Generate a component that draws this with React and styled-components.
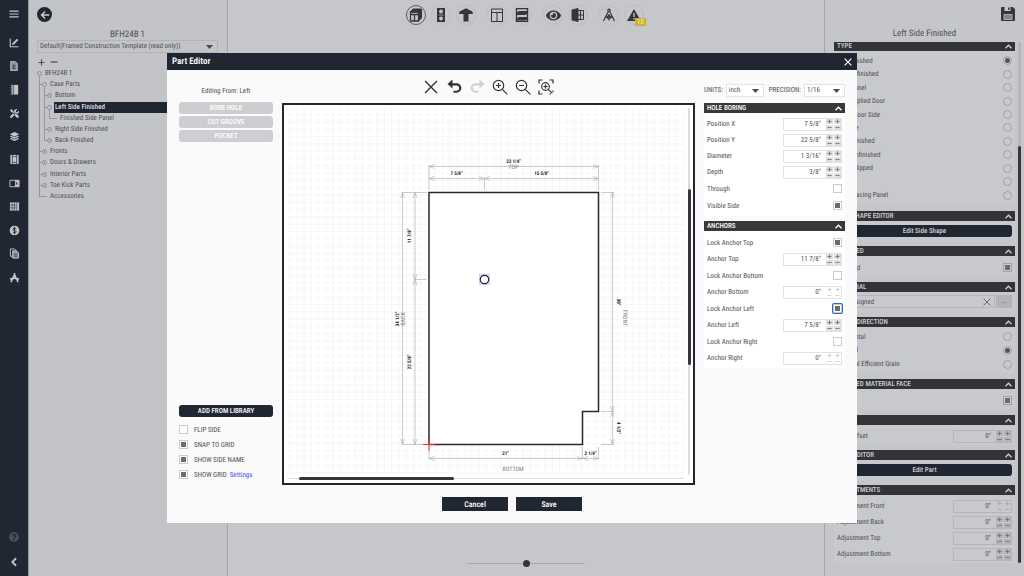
import React from "react";
import styled, { createGlobalStyle, css } from "styled-components";
import { FaTools, FaLayerGroup, FaQuestionCircle, FaEye } from "react-icons/fa";

const navy = "#202632";
const charcoal = "#39393b";

const GlobalStyle = createGlobalStyle`
  *, *::before, *::after { box-sizing: border-box; }
  body {
    margin: 0;
    font-family: "Roboto Condensed", "Liberation Sans Narrow", Roboto, sans-serif;
    font-size: 7px;
    line-height: 10px;
    text-rendering: geometricPrecision;
    color: #505053;
    background: #c6c7cb;
  }
  button, input, select { font: inherit; color: inherit; text-rendering: inherit; margin: 0; padding: 0; border: 0; background: none; border-radius: 0; }
  h1, h2, h3, p, ul { margin: 0; padding: 0; font: inherit; list-style: none; }
  svg { display: block; }
`;

/* ---------- shell ---------- */
const Shell = styled.div`
  display: grid;
  grid-template-columns: 28px 200px minmax(0, 1fr) 200px;
  min-height: 100vh;
`;
const Sidebar = styled.nav`
  display: flex;
  flex-direction: column;
  align-items: center;
  background: ${navy};
  color: #c3c4c8;
  padding-bottom: 3px;
`;
const SideList = styled.div`
  display: grid;
  grid-auto-rows: 1fr;
  min-height: 258px;
  margin-top: 3px;
`;
const SideButton = styled.button`
  display: grid;
  place-items: center;
  width: 28px;
  min-height: 23px;
  ${(p) => p.$first && "height: 28px;"}
  ${(p) => p.$dim && "color: #4b505a; margin-bottom: 2px;"}
`;
const Spacer = styled.div`flex: 1;`;

const TreePanel = styled.aside`
  background: #c3c4c8;
  border-left: 1px solid #92979f;
  border-right: 1px solid #a5a6aa;
  padding: 7px 9px 0 8px;
`;
const BackButton = styled.button`
  display: grid;
  place-items: center;
  width: 15px;
  height: 15px;
  border-radius: 50%;
  background: ${navy};
  color: #d0d1d4;
`;
const PanelTitle = styled.h2`
  text-align: center;
  font-size: 9px;
  line-height: 12px;
  padding-top: 1px;
  margin: 6px 0 -1px;
`;
const SelectBox = styled.span`
  display: flex;
  align-items: center;
  position: relative;
  height: 13px;
  flex: ${(p) => p.$width || "auto"};
  border: 1px solid ${(p) => (p.$light ? "#e4e4e4" : "#b3b4b8")};
  background: ${(p) => (p.$light ? "#fff" : "transparent")};
  select { appearance: none; width: 100%; height: 11px; padding: 0 2px; line-height: 11px; outline: none; }
  svg { position: absolute; right: 4px; top: 4px; pointer-events: none; }
`;
const TreeTools = styled.div`
  display: flex;
  gap: 5px;
  padding: 5px 0 2px;
  button { display: grid; place-items: center; width: 8px; height: 8px; }
`;
const Tree = styled.ul`
  display: grid;
  grid-auto-rows: 1fr;
  min-height: 134px;
  margin-right: -9px;
`;
const TreeRow = styled.li`display: flex; align-items: stretch;`;
const Guide = styled.span`
  position: relative;
  width: 5px;
  &::before {
    content: "";
    position: absolute;
    left: 2px;
    top: 0;
    width: 1px;
    height: ${(p) => ({ "|": "100%", T: "100%", L: "50%" }[p.$kind] || 0)};
    background: #96979b;
  }
  &::after {
    content: "";
    position: absolute;
    left: ${(p) => (p.$kind === "-" ? 0 : "2px")};
    right: 0;
    top: 5px;
    height: ${(p) => ("TL-".includes(p.$kind) ? "1px" : 0)};
    background: #96979b;
  }
`;
const Toggle = styled.button`
  position: relative;
  width: 5px;
  height: 5px;
  margin-top: 3px;
  border: 1px solid #8e8f93;
  border-radius: 50%;
  ${(p) => p.$open && css`
    &::after { content: ""; position: absolute; left: 1px; top: 4px; width: 1px; height: 4px; background: #96979b; }
  `}
  ${(p) => !p.$open && css`
    &::before { content: ""; position: absolute; left: 1px; top: 1px; width: 1px; height: 1px; background: #77787c; }
  `}
`;
const TreeLabel = styled.a`
  flex: 1;
  margin-left: 2px;
  padding-left: 1px;
  line-height: 11px;
  white-space: nowrap;
  text-decoration: none;
  color: inherit;
  ${(p) => p.$selected && `background: ${navy}; color: #dcdde0; font-weight: 500;`}
`;

const Stage = styled.main`
  display: flex;
  flex-direction: column;
  align-items: center;
  justify-content: space-between;
  background: #c6c7cb;
  padding: 5px 0 9px;
`;
const ViewBar = styled.div`display: flex; gap: 11px; padding-right: 2px; color: #35363a;`;
const ViewGroup = styled.div`display: flex; gap: 5px;`;
const ViewButton = styled.button`
  position: relative;
  display: grid;
  place-items: center;
  width: 20px;
  height: 20px;
  border-radius: 50%;
  border: 1px solid ${(p) => (p.$active ? "#5d5e62" : "#bbbcc0")};
`;
const Badge = styled.span`
  position: absolute;
  right: -3px;
  bottom: -2px;
  padding: 0 2px;
  line-height: 8px;
  background: #c6b32f;
  color: #f0edd8;
`;
const Zoom = styled.input`
  appearance: none;
  width: 118px;
  height: 7px;
  background: linear-gradient(#aaabaf, #aaabaf) center / 100% 1px no-repeat;
  &::-webkit-slider-thumb {
    appearance: none;
    width: 7px;
    height: 7px;
    border-radius: 50%;
    background: #35363a;
  }
`;

/* ---------- property panels ---------- */
const PropsPanel = styled.aside`
  display: flex;
  flex-direction: column;
  background: #c5c6ca;
  border-left: 1px solid #a5a6aa;
`;
const SaveButton = styled.button`
  align-self: flex-end;
  margin: 7px 9px 0 0;
  color: #35363a;
`;
const PropsScroll = styled.div`
  display: flex;
  gap: 3px;
  margin-top: 3px;
  padding: 0 3px 0 9px;
  overflow: hidden;
`;
const Stack = styled.div`
  display: flex;
  flex-direction: column;
  gap: 5px;
  flex: 1;
  min-width: 0;
  ${(p) => p.$scrolled && "margin-top: -1px;"}
`;
const Track = styled.div`
  position: relative;
  background: ${(p) => p.$color || "#b4b5b9"};
  border-radius: 2px;
  &::after {
    content: "";
    position: absolute;
    border-radius: 2px;
    background: #35363a;
    ${(p) => p.$thumb}
  }
`;
const PropsTrack = styled(Track)`width: 3px;`;
const SectionBox = styled.section`
  background: ${(p) => (p.$light ? "#fff" : "#c8c9cd")};
`;
const SectionHead = styled.h3`
  display: flex;
  align-items: center;
  justify-content: space-between;
  height: 10px;
  padding: 0 3px;
  background: ${(p) => (p.$light ? charcoal : "#333438")};
  color: ${(p) => (p.$light ? "#fff" : "#cfd0d3")};
  font-weight: 500;
  text-transform: uppercase;
  white-space: nowrap;
`;
const SectionBody = styled.div`
  display: flex;
  flex-direction: column;
  padding: 3px 3px 1px;
  min-height: ${(p) => p.$min || 0}px;
`;
const Row = styled.label`
  display: flex;
  align-items: center;
  justify-content: space-between;
  height: ${(p) => (p.$tall ? 17 : 16)}px;
  white-space: nowrap;
`;
const RadioRows = styled.div`
  display: grid;
  grid-auto-rows: 1fr;
  min-height: ${(p) => p.$min}px;
  label { display: flex; align-items: center; justify-content: space-between; white-space: nowrap; }
`;
const Radio = styled.input.attrs({ type: "radio" })`
  appearance: none;
  width: 9px;
  height: 9px;
  border: 1px solid #a2a3a7;
  border-radius: 50%;
  &:checked { padding: 1px; background: #55565a content-box; }
`;
const Check = styled.input.attrs({ type: "checkbox" })`
  appearance: none;
  width: 9px;
  height: 9px;
  flex: none;
  border: 1px solid ${(p) => (p.$dark ? "#a2a3a7" : "#cbcbcb")};
  background-color: ${(p) => (p.$dark ? "transparent" : "#fff")};
  &:checked {
    background: linear-gradient(#6c6c6e, #6c6c6e) center / 5px 5px no-repeat ${(p) => (p.$dark ? "transparent" : "#fff")};
  }
  ${(p) => p.$focus && "box-shadow: 0 0 0 1px #2f62d0; border-radius: 1px;"}
`;
const NumberBox = styled.span`
  display: flex;
  width: 59px;
  height: 13px;
  border: 1px solid ${(p) => (p.$dark ? "#b5b6ba" : "#e2e2e2")};
  background: ${(p) => (p.$dark ? "transparent" : "#fff")};
  input { flex: 1; min-width: 0; text-align: right; padding-right: 5px; outline: none; }
`;
const Steppers = styled.span`
  display: grid;
  grid-template-columns: 7px 7px;
  grid-template-rows: 5px 5px;
  gap: 1px;
  color: #6e6e71;
  opacity: ${(p) => (p.$off ? 0.35 : 1)};
  button {
    display: grid;
    place-items: center;
    background: ${(p) => (p.$off ? "transparent" : p.$dark ? "#b3b4b8" : "#e0e0e0")};
  }
`;
const WideButton = styled.button`
  height: 12px;
  flex: none;
  border-radius: 3px;
  background: ${(p) => (p.$dim ? "#cdced2" : navy)};
  color: ${(p) => (p.$soft ? "#cfd0d3" : "#fff")};
  font-weight: 500;
  line-height: 12px;
  ${(p) => p.$soft && "margin-top: 1px;"}
`;
const MaterialRow = styled.div`
  display: grid;
  grid-template-columns: 1fr 16px;
  gap: 1px;
  height: 13px;
`;
const MaterialField = styled.span`
  display: flex;
  align-items: center;
  justify-content: space-between;
  border: 1px solid #b5b6ba;
  padding: 0 3px 0 4px;
  input { width: 90px; }
`;
const MoreButton = styled.button`background: #b3b4b8; line-height: 9px;`;

/* ---------- dialog ---------- */
const Overlay = styled.div`
  position: fixed;
  inset: 0;
  display: grid;
  place-items: center;
`;
const Dialog = styled.section`
  width: 100%;
  max-width: 690px;
  background: #fafafa;
`;
const DialogHead = styled.header`
  display: flex;
  align-items: center;
  justify-content: space-between;
  height: 17px;
  padding: 0 5px;
  background: ${navy};
  color: #fff;
  h1 { font-size: 9px; line-height: 12px; font-weight: 600; }
`;
const DialogBody = styled.div`
  display: grid;
  grid-template-columns: 94px minmax(0, 1fr) 141px;
  column-gap: 9px;
  padding: 0 12px;
`;
const Column = styled.div`display: flex; flex-direction: column;`;
const TopLine = styled.div`
  display: flex;
  align-items: center;
  justify-content: ${(p) => (p.$center ? "center" : "flex-start")};
  gap: ${(p) => p.$gap || 0}px;
  height: 33px;
  padding-top: ${(p) => p.$pad || 0}px;
  white-space: nowrap;
`;
const Setting = styled.span`
  display: flex;
  align-items: center;
  gap: 3px;
  &:last-child { margin-left: auto; }
`;
const ButtonStack = styled.div`display: flex; flex-direction: column; gap: 2px; margin-top: -1px;`;
const Options = styled.div`
  display: flex;
  flex-direction: column;
  margin: 5px 0 3px;
  text-transform: uppercase;
`;
const Option = styled.div`
  display: flex;
  align-items: center;
  height: 15px;
  label { display: flex; align-items: center; gap: 6px; }
  a { margin-left: 3px; color: #3b4ff0; text-decoration: none; text-transform: none; }
`;
const ToolButton = styled.button`
  display: grid;
  place-items: center;
  width: 16px;
  height: 16px;
  color: ${(p) => (p.$off ? "#d2d2d2" : "#333")};
`;
const Drawing = styled.div`
  display: grid;
  grid-template-columns: minmax(0, 1fr) 5px;
  grid-template-rows: auto 8px;
  border: 2px solid ${navy};
  background: #fff;
  svg { width: 100%; height: auto; }
`;
const TrackY = styled(Track)`width: 2px; margin-top: 3px;`;
const TrackX = styled(Track)`height: 1px; margin: 3px 4px 0 3px;`;
const Footer = styled.footer`
  display: flex;
  justify-content: center;
  gap: 8px;
  padding: 12px 0;
  button {
    width: 66px;
    height: 14px;
    padding-top: 1px;
    background: ${navy};
    color: #fff;
    font-size: 8px;
    font-weight: 500;
  }
`;

/* ---------- icons ---------- */
const Icon = ({ size = 12, box = 12, children, w = 1 }) => (
  <svg width={size} height={size} viewBox={`0 0 ${box} ${box}`} fill="none" stroke="currentColor" strokeWidth={w} aria-hidden="true">
    {children}
  </svg>
);
const Caret = () => (
  <svg width="7" height="4" viewBox="0 0 7 4" aria-hidden="true"><path d="M0 0h7L3.5 4z" fill="#4b4b4e" /></svg>
);
const ChevronUp = () => (
  <svg width="7" height="5" viewBox="0 0 7 5" fill="none" stroke="currentColor" strokeWidth="1.3" aria-hidden="true"><path d="M.5 4.2l3-3 3 3" /></svg>
);
const Cross = ({ size = 8, w = 1.2 }) => (
  <Icon size={size} box={8} w={w}><path d="M.6.6l6.8 6.8M7.4.6L.6 7.4" /></Icon>
);
const Plus = ({ size = 5, w = 0.8 }) => <Icon size={size} box={5} w={w}><path d="M2.5.4v4.2M.4 2.5h4.2" /></Icon>;
const Minus = ({ size = 5, w = 0.8 }) => <Icon size={size} box={5} w={w}><path d="M.4 2.5h4.2" /></Icon>;

const sideIcons = [
  ["Statistics", <Icon size={10}><path d="M1.5.5v10h10" strokeWidth="1.3" /><path d="M3.5 8.5l.8-2.6L9.6.9l1.5 1.5L6 7.7z" fill="currentColor" stroke="none" /></Icon>],
  ["Report", <Icon size={10}><path d="M2 .5h5.5L10 3v8.5H2z" fill="#92959b" /><path d="M4 5h4M4 7h4M4 9h4M5.5 5v5" stroke={navy} strokeWidth=".6" /></Icon>],
  ["Catalog", <Icon size={11}><path d="M3.5 1H10v10.5H3.5z" fill="currentColor" stroke="none" /><path d="M2.6 1v10.5" strokeDasharray="1.5 .8" /><path d="M5 1v10.5" stroke={navy} strokeWidth=".6" /></Icon>],
  ["Tools", <FaTools size={9} />],
  ["Materials", <FaLayerGroup size={9} />],
  ["Cabinet", <Icon size={11}><path d="M1.5 1h9v10h-9z" fill="currentColor" stroke="none" /><path d="M3.7 1v10M8.3 1v10M3.7 2.8h4.6M3.7 9.2h4.6" stroke={navy} strokeWidth=".7" /></Icon>],
  ["Layout", <Icon size={11}><path d="M1 2.5h10v7H1z" /><path d="M6.5 2.5h4.5v7H6.5z" fill="currentColor" stroke="none" /><path d="M8 5l2 2M8 4.5v3" stroke={navy} strokeWidth=".8" /></Icon>],
  ["Grid", <Icon size={11}><path d="M1 1.5h10v9H1z" fill="currentColor" stroke="none" /><path d="M1 4.5h7M1 7.5h7M3.5 1.5v9M6 1.5v9M8.5 1.5v9" stroke={navy} strokeWidth=".6" /></Icon>],
  ["Pricing", <Icon size={11}><circle cx="6" cy="6" r="5.3" fill="currentColor" stroke="none" /><path d="M7.9 4.3C7 3 4.3 3.2 4.3 4.7c0 1.7 3.5 1 3.5 2.7C7.8 9 5 9 4.1 7.7M6 2v8" stroke={navy} /></Icon>],
  ["Documents", <Icon size={11}><path d="M1.5 1h4.5l2 2M1.5 1v8h2" /><path d="M4 3h4l2.5 2.5V11H4z" fill="#92959b" /><path d="M5.5 7h3.5M5.5 9h3.5" stroke={navy} strokeWidth=".7" /></Icon>],
  ["Design", <Icon size={11} w={1.8}><path d="M6 1v2M6 3L2 11M6 3l4 8M1 7.5h3l2-1.5 2 1.5h3" /></Icon>],
];

const viewGroups = [
  [
    ["3D view", true, <Icon size={14} box={14}><path d="M1.5 4h8v9h-8z" strokeWidth="1.3" /><path d="M1.5 4L4 1h8.5L9.500 4zM9.500 4l3-3v9l-3 3z" fill="currentColor" /><path d="M1.5 6.500h8M5.500 6.500V13" strokeWidth="1.3" /></Icon>],
    ["Front view", false, <Icon size={14} box={14}><path d="M3 0h8v14H3z" fill="currentColor" stroke="none" /><circle cx="7" cy="3.5" r="1.9" fill="#c6c7cb" stroke="none" /><circle cx="7" cy="10.5" r="1.9" fill="#c6c7cb" stroke="none" /><path d="M4.5 7h5" stroke="#c6c7cb" strokeWidth=".7" /></Icon>],
    ["Top view", false, <Icon size={14} box={14}><path d="M0 6C0 3 2.5 2.8 4.5 1.5 6 0 8 0 9.5 1.5 11.5 2.8 14 3 14 6H9.5v7.5h-5V6z" fill="currentColor" stroke="none" /></Icon>],
  ],
  [
    ["Doors", false, <Icon size={14} box={14}><path d="M1.5 1h11v12.5h-11zM1.5 4.5h11M7 4.5v9" /></Icon>],
    ["Shelves", false, <Icon size={14} box={14}><path d="M1.5.5h11v13h-11z" strokeWidth="1.4" /><path d="M1 5l3-2h9v2.5L10 7H1zM1 11l3-2h9v2l-3 1.5H1z" fill="currentColor" stroke="none" /></Icon>],
  ],
  [
    ["Visibility", false, <FaEye size={15} />],
    ["Open doors", false, <Icon size={14} box={14}><path d="M1 2l6-1.5v13L1 12z" fill="currentColor" /><path d="M7 2.5h5.5v9H7M7 7h5.5M9.5 2.5v9" /></Icon>],
  ],
  [
    ["Measure", false, <Icon size={14} box={14} w={1.2}><circle cx="7" cy="2.3" r="1.2" /><path d="M6.5 3.3L1.5 13M7.5 3.3l5 9.7M2.5 9.5c2.5 0 4-1 4.5-3 .5 2 2 3 4.5 3M7 8v4.5M5 10.2h4" /></Icon>],
    ["Warnings", false, <Icon size={14} box={14}><path d="M7 1l7 12H0z" fill="currentColor" stroke="none" /><path d="M7 5v4M7 10.2v1.5" stroke="#c6c7cb" strokeWidth="1.3" /></Icon>],
  ],
];

const undoPath = "M5.5.5L.5 5l5 4.5V6.5h4a2.6 2.6 0 0 1 0 5.2H6.5v2h3.2a4.6 4.6 0 0 0 0-9.4H5.5z";
const drawTools = [
  ["Delete", false, <Cross size={14} w={0.8} />],
  ["Undo", false, <Icon size={15} box={15}><path d={undoPath} fill="currentColor" stroke="none" /></Icon>],
  ["Redo", true, <Icon size={15} box={15}><path d={undoPath} transform="matrix(-1 0 0 1 15 0)" fill="currentColor" stroke="none" /></Icon>],
  ["Zoom in", false, <Icon size={16} box={16} w={1.2}><circle cx="6.5" cy="6.5" r="5.2" /><path d="M10.3 10.3l5 5M4 6.5h5M6.5 4v5" /></Icon>],
  ["Zoom out", false, <Icon size={16} box={16} w={1.2}><circle cx="6.5" cy="6.5" r="5.2" /><path d="M10.3 10.3l5 5M4 6.5h5" /></Icon>],
  ["Zoom to fit", false, <Icon size={16} box={16} w={1.2}><circle cx="7.5" cy="7.5" r="3.8" /><path d="M10.3 10.3l4 4M5.5 7.5h4M7.5 5.5v4M1 4.5V1h3.5M11.5 1H15v3.5M1 11.5V15h3.5M11.5 15H13M15 11.5V13" /></Icon>],
];

/* ---------- data ---------- */
const tree = [
  ["", "open", "BFH24B 1"],
  ["T", "open", "Case Parts"],
  ["|T", "closed", "Bottom"],
  ["|T", "open", "Left Side Finished", true],
  ["||L", "leaf", "Finished Side Panel"],
  ["|T", "closed", "Right Side Finished"],
  ["|L", "closed", "Back Finished"],
  ["T", "closed", "Fronts"],
  ["T", "closed", "Doors & Drawers"],
  ["T", "closed", "Interior Parts"],
  ["T", "closed", "Toe Kick Parts"],
  ["L", "leaf", "Accessories"],
];
const sideTypes = [
  "Left Finished", "Left Unfinished", "Side Panel", "Left Applied Door", "False Door Side", "No Side",
  "Both Finished", "Both Unfinished", "Right Flipped", "Open", "Right Facing Panel",
];

/* ---------- shared parts ---------- */
const Section = ({ title, light, min, children }) => (
  <SectionBox $light={light}>
    <SectionHead $light={light}><span>{title}</span><ChevronUp /></SectionHead>
    <SectionBody $min={min}>{children}</SectionBody>
  </SectionBox>
);
const NumberField = ({ label, value, off, dark }) => (
  <Row as="div">
    <label htmlFor={label}>{label}</label>
    <NumberBox $dark={dark}>
      <input id={label} defaultValue={value} disabled={off} />
      <Steppers $off={off} $dark={dark}>
        <button aria-label={`${label} increase`}><Plus /></button>
        <button aria-label={`${label} increase fraction`}><Plus /></button>
        <button aria-label={`${label} decrease`}><Minus /></button>
        <button aria-label={`${label} decrease fraction`}><Minus /></button>
      </Steppers>
    </NumberBox>
  </Row>
);
const CheckField = ({ label, on, focus, dark }) => (
  <Row $tall><span>{label}</span><Check defaultChecked={on} $focus={focus} $dark={dark} /></Row>
);
const RadioField = ({ label, name, on }) => (
  <label><span>{label}</span><Radio name={name} defaultChecked={on} /></label>
);

/* ---------- part drawing ---------- */
const Arrow = ({ x, y, r }) => <path d="M5.5-2L0 0l5.5 2" transform={`translate(${x} ${y}) rotate(${r})`} />;
const DimX = ({ a, b, y }) => (
  <g><path d={`M${a} ${y}H${b}`} /><Arrow x={a} y={y} r={0} /><Arrow x={b} y={y} r={180} /></g>
);
const DimY = ({ a, b, x }) => (
  <g><path d={`M${x} ${a}V${b}`} /><Arrow x={x} y={a} r={90} /><Arrow x={x} y={b} r={270} /></g>
);
const Mark = ({ x, y, r = 0, side, children }) => (
  <text
    transform={`translate(${x} ${y}) rotate(${r})`}
    textAnchor="middle"
    dominantBaseline="central"
    fontSize={side ? 6 : 5}
    fontWeight={side ? 400 : 700}
    fill={side ? "#808080" : "#222"}
  >
    {children}
  </text>
);
const PartDrawing = () => (
  <svg viewBox="284 105 404 370" role="img" aria-label="Left side drawing">
    <defs>
      <pattern id="grid" x="289" y="107" width="7.3" height="7.3" patternUnits="userSpaceOnUse">
        <path d="M.5 0v7.3M0 .5h7.3" stroke="#f6f6f6" strokeWidth="1" fill="none" />
      </pattern>
    </defs>
    <path d="M287 108H684V475H287z" fill="url(#grid)" />
    <path d="M429 192.5H598.5V411.5H582.5V444.5H429z" fill="#fff" stroke="#2a2a2c" strokeWidth="1.5" />
    <g stroke="#a9a9a9" strokeWidth=".6" fill="none">
      <DimX a={429} b={598.5} y={166.5} />
      <DimX a={429} b={484.5} y={178.5} />
      <DimX a={484.5} b={598.5} y={178.5} />
      <DimX a={429} b={582.5} y={458.5} />
      <DimX a={582.5} b={598.5} y={458.5} />
      <DimY a={192.5} b={444.5} x={402.5} />
      <DimY a={192.5} b={279.5} x={415} />
      <DimY a={279.5} b={444.5} x={415} />
      <DimY a={192.5} b={411.5} x={612.5} />
      <DimY a={411.5} b={444.5} x={612.5} />
      <path d="M429 165v25M598.5 165v25M484.5 178v12M402 192.5h25M415 279.5h11.5M402 444.5h25M601 192.5h13M601 411.5h13M601 444.5h13M429 447v12M582.5 447v12M598.5 447v12" />
    </g>
    <path d="M423 444.5h12M429 438.5v12" stroke="#e8362e" />
    <rect x="479.5" y="274.5" width="10" height="10" fill="#dfe2fb" stroke="#b4bbf3" strokeWidth=".6" />
    <circle cx="484.5" cy="279.5" r="4.2" fill="#fff" stroke="#23232b" strokeWidth="1.2" />
    <Mark x={513.5} y={161.5}>23 1/4"</Mark>
    <Mark x={513.5} y={167} side>TOP</Mark>
    <Mark x={456.5} y={174}>7 5/8"</Mark>
    <Mark x={541.5} y={174}>15 5/8"</Mark>
    <Mark x={410} y={236} r={-90}>11 7/8"</Mark>
    <Mark x={410} y={362} r={-90}>22 5/8"</Mark>
    <Mark x={398} y={319} r={-90}>34 1/2"</Mark>
    <Mark x={403.5} y={319} r={-90} side>BACK</Mark>
    <Mark x={617.5} y={302} r={90}>30"</Mark>
    <Mark x={624.5} y={318} r={90} side>FRONT</Mark>
    <Mark x={617.5} y={428} r={90}>4 1/2"</Mark>
    <Mark x={505.5} y={454}>21"</Mark>
    <Mark x={590.5} y={454}>2 1/4"</Mark>
    <Mark x={513} y={469} side>BOTTOM</Mark>
  </svg>
);

export default function App() {
  return (
    <>
      <GlobalStyle />
      <Shell>
        <Sidebar>
          <SideButton $first aria-label="Menu"><Icon size={10}><path d="M.5 2.5h11M.5 6h11M.5 9.5h11" strokeWidth="1.4" /></Icon></SideButton>
          <SideList>
            {sideIcons.map(([name, icon]) => <SideButton key={name} aria-label={name}>{icon}</SideButton>)}
          </SideList>
          <Spacer />
          <SideButton $dim aria-label="Help"><FaQuestionCircle size={10} /></SideButton>
          <SideButton aria-label="Collapse"><Icon size={10} w={2.2}><path d="M8.5 1.5L4 6l4.5 4.5" /></Icon></SideButton>
        </Sidebar>

        <TreePanel>
          <BackButton aria-label="Back"><Icon size={10} w={1.6}><path d="M11 6H2M6 1.8L1.8 6 6 10.2" /></Icon></BackButton>
          <PanelTitle>BFH24B 1</PanelTitle>
          <SelectBox>
            <select aria-label="Template"><option>Default(Framed Construction Template (read only))</option></select>
            <Caret />
          </SelectBox>
          <TreeTools>
            <button aria-label="Expand all"><Plus size={7} /></button>
            <button aria-label="Collapse all"><Minus size={8} /></button>
          </TreeTools>
          <Tree>
            {tree.map(([guides, state, label, selected]) => (
              <TreeRow key={label}>
                {[...guides].map((kind, i) => <Guide key={i} $kind={kind} />)}
                {state === "leaf" ? <Guide $kind="-" /> : <Toggle $open={state === "open"} aria-label={`Toggle ${label}`} />}
                <TreeLabel href="#" $selected={selected}>{label}</TreeLabel>
              </TreeRow>
            ))}
          </Tree>
        </TreePanel>

        <Stage>
          <ViewBar>
            {viewGroups.map((group, g) => (
              <ViewGroup key={g}>
                {group.map(([name, active, icon]) => (
                  <ViewButton key={name} $active={active} aria-label={name}>
                    {icon}
                    {name === "Warnings" && <Badge>10</Badge>}
                  </ViewButton>
                ))}
              </ViewGroup>
            ))}
          </ViewBar>
          <Zoom type="range" aria-label="Zoom" defaultValue={50} />
        </Stage>

        <PropsPanel>
          <SaveButton aria-label="Save">
            <Icon size={14} box={14}>
              <path d="M.5.5H12l1.5 1.5v11.5H.5z" fill="currentColor" />
              <path d="M3.5 0h6v4h-6z" fill="#c5c6ca" stroke="none" /><path d="M7 .5h1.5V3H7z" fill="currentColor" stroke="none" />
              <path d="M2.5 7h9v6h-9z" fill="#a8a9ad" stroke="none" /><path d="M3.5 9h7M3.5 11h7" strokeWidth=".6" />
            </Icon>
          </SaveButton>
          <PanelTitle>Left Side Finished</PanelTitle>
          <PropsScroll>
            <Stack $scrolled>
              <Section title="Type" min={155}>
                <RadioRows $min={148}>
                  {sideTypes.map((t, i) => <RadioField key={t} name="type" label={t} on={i === 0} />)}
                </RadioRows>
              </Section>
              <Section title="Side Shape Editor" min={20}><WideButton $soft>Edit Side Shape</WideButton></Section>
              <Section title="Finished" min={21}><CheckField label="Finished" on dark /></Section>
              <Section title="Material" min={20}>
                <MaterialRow>
                  <MaterialField>
                    <input aria-label="Material" defaultValue="Unassigned" />
                    <Cross size={8} w={0.8} />
                  </MaterialField>
                  <MoreButton aria-label="Choose material">...</MoreButton>
                </MaterialRow>
              </Section>
              <Section title="Grain Direction" min={47}>
                <RadioRows $min={41}>
                  <RadioField name="grain" label="Horizontal" />
                  <RadioField name="grain" label="Vertical" on />
                  <RadioField name="grain" label="Material Efficient Grain" />
                </RadioRows>
              </Section>
              <Section title="Finished Material Face" min={21}><CheckField label="Face" on dark /></Section>
              <Section title="Toe" min={20}><NumberField label="Side Offset" value={'0"'} dark /></Section>
              <Section title="Part Editor" min={20}><WideButton $soft>Edit Part</WideButton></Section>
              <Section title="Adjustments">
                <NumberField label="Adjustment Front" value={'0"'} off dark />
                <NumberField label="Adjustment Back" value={'0"'} dark />
                <NumberField label="Adjustment Top" value={'0"'} dark />
                <NumberField label="Adjustment Bottom" value={'0"'} dark />
              </Section>
            </Stack>
            <PropsTrack $thumb="left: 0; right: 0; top: 20%; bottom: 0;" />
          </PropsScroll>
        </PropsPanel>
      </Shell>

      <Overlay>
        <Dialog role="dialog" aria-label="Part Editor">
          <DialogHead>
            <h1>Part Editor</h1>
            <button aria-label="Close"><Cross size={8} /></button>
          </DialogHead>
          <DialogBody>
            <Column>
              <TopLine $center $pad={8}>Editing From: Left</TopLine>
              <ButtonStack>
                <WideButton $dim>BORE HOLE</WideButton>
                <WideButton $dim>CUT GROOVE</WideButton>
                <WideButton $dim>POCKET</WideButton>
              </ButtonStack>
              <Spacer />
              <WideButton>ADD FROM LIBRARY</WideButton>
              <Options>
                <Option><label><Check /><span>Flip Side</span></label></Option>
                <Option><label><Check defaultChecked /><span>Snap to Grid</span></label></Option>
                <Option><label><Check defaultChecked /><span>Show Side Name</span></label></Option>
                <Option><label><Check defaultChecked /><span>Show Grid</span></label><a href="#">Settings</a></Option>
              </Options>
            </Column>

            <Column>
              <TopLine $center $gap={7}>
                {drawTools.map(([name, off, icon]) => <ToolButton key={name} $off={off} aria-label={name}>{icon}</ToolButton>)}
              </TopLine>
              <Drawing>
                <PartDrawing />
                <TrackY $color="#dcdcdc" $thumb="left: 0; width: 3px; top: 22%; height: 48%;" />
                <TrackX $color="#dcdcdc" $thumb="top: -1px; height: 3px; left: 3%; width: 39%;" />
              </Drawing>
            </Column>

            <Column>
              <TopLine $pad={7}>
                <Setting>
                  <label htmlFor="units">UNITS:</label>
                  <SelectBox $light $width="0 0 38px"><select id="units"><option>inch</option></select><Caret /></SelectBox>
                </Setting>
                <Setting>
                  <label htmlFor="precision">PRECISION:</label>
                  <SelectBox $light $width="0 0 41px"><select id="precision"><option>1/16</option></select><Caret /></SelectBox>
                </Setting>
              </TopLine>
              <Stack>
                <Section title="Hole Boring" light min={103}>
                  <NumberField label="Position X" value={'7 5/8"'} />
                  <NumberField label="Position Y" value={'22 5/8"'} />
                  <NumberField label="Diameter" value={'1 3/16"'} />
                  <NumberField label="Depth" value={'3/8"'} />
                  <CheckField label="Through" />
                  <CheckField label="Visible Side" on />
                </Section>
                <Section title="Anchors" light min={137}>
                  <CheckField label="Lock Anchor Top" on />
                  <NumberField label="Anchor Top" value={'11 7/8"'} />
                  <CheckField label="Lock Anchor Bottom" />
                  <NumberField label="Anchor Bottom" value={'0"'} off />
                  <CheckField label="Lock Anchor Left" on focus />
                  <NumberField label="Anchor Left" value={'7 5/8"'} />
                  <CheckField label="Lock Anchor Right" />
                  <NumberField label="Anchor Right" value={'0"'} off />
                </Section>
              </Stack>
            </Column>
          </DialogBody>
          <Footer><button>Cancel</button><button>Save</button></Footer>
        </Dialog>
      </Overlay>
    </>
  );
}
